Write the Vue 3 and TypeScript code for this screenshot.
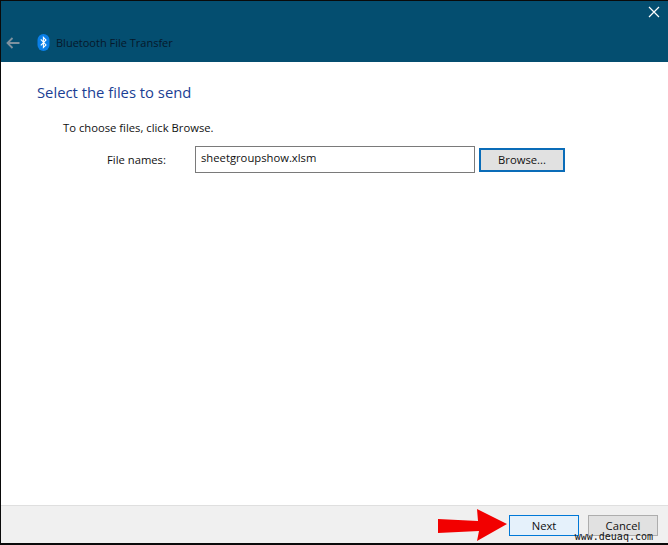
<script setup lang="ts">
const fileName: string = 'sheetgroupshow.xlsm'
</script>

<template>
  <div class="window">
    <header class="titlebar">
      <div class="close-row">
        <svg class="close" width="12" height="12" viewBox="0 0 12 12">
          <path d="M1 1 L11 11 M11 1 L1 11" stroke="#fff" stroke-width="1.2" fill="none" />
        </svg>
      </div>
      <div class="title-row">
        <svg class="back" width="14" height="12" viewBox="0 0 14 12">
          <path d="M6.5 1 L1.5 6 L6.5 11 M1.5 6 H13.5" stroke="#7f929f" stroke-width="1.8" fill="none" />
        </svg>
        <svg class="bt" width="13" height="17" viewBox="0 0 13 17">
          <rect x="0.5" y="0" width="12" height="17" rx="6" fill="#0a7fe8" />
          <path d="M3.8 5.4 L9 10.9 L6.4 13.4 V3.4 L9 6 L3.8 11.4" stroke="#fff" stroke-width="1.1" fill="none" />
        </svg>
        <span class="title">Bluetooth File Transfer</span>
      </div>
    </header>
    <main class="content">
      <h1 class="heading">Select the files to send</h1>
      <p class="hint">To choose files, click Browse.</p>
      <div class="field">
        <label class="label">File names:</label>
        <div class="input">{{ fileName }}</div>
        <button class="btn browse">Browse...</button>
      </div>
    </main>
    <footer class="footer">
      <div class="next-wrap">
        <svg class="arrow" width="71" height="33" viewBox="0 0 71 33">
          <path d="M0 10 L40 12 L39 0 L69 15 L39 32 L41 22 L0 24 Z" fill="#f20000" />
        </svg>
        <button class="btn next">Next</button>
      </div>
      <button class="btn cancel">Cancel</button>
      <span class="watermark">www.deuaq.com</span>
    </footer>
  </div>
</template>

<style>
html, body { margin: 0; background: #fff; }
</style>

<style scoped>
.window {
  width: 668px;
  height: 545px;
  box-sizing: border-box;
  border: 1px solid #0a0a0a;
  border-width: 1px 0 2px 1px;
  display: flex;
  flex-direction: column;
  font-family: "Open Sans", "Noto Sans", sans-serif;
  font-size: 11.25px;
  color: #111;
  background: #fff;
  overflow: hidden;
}
.titlebar {
  height: 61px;
  background: #044e70;
  flex: none;
  display: flex;
  flex-direction: column;
}
.close-row {
  display: flex;
  justify-content: flex-end;
  padding: 5px 8px 0 0;
  height: 14px;
}
.title-row {
  display: flex;
  align-items: center;
  margin-top: 14px;
  padding-left: 5px;
}
.bt { margin-left: 17px; }
.title {
  margin-left: 6px;
  color: #06182a;
  font-size: 11px;
}
.content {
  flex: 1;
  padding: 0 0 0 36px;
}
.heading {
  margin: 20px 0 0;
  font-weight: 400;
  font-size: 14.8px;
  line-height: 21px;
  color: #1a3e94;
}
.hint {
  margin: 17px 0 0 26px;
  line-height: 16px;
}
.field {
  display: flex;
  align-items: center;
  margin: 10px 0 0 70px;
}
.label { width: 88px; }
.input {
  width: 273px;
  height: 25px;
  border: 1px solid #7a7a7a;
  padding-left: 5px;
  line-height: 21px;
  color: #111;
}
.btn {
  font: inherit;
  color: #111;
  padding: 0;
  box-sizing: border-box;
}
.browse {
  margin-left: 4px;
  width: 86px;
  height: 24px;
  background: #e1e1e1;
  border: 2px solid #0a6cb8;
}
.footer {
  flex: none;
  height: 38px;
  background: #f0f0f0;
  border-top: 1px solid #dfdfdf;
  box-sizing: border-box;
  display: flex;
  align-items: flex-start;
  justify-content: flex-end;
  padding: 9px 10px 0 0;
  position: relative;
}
.next-wrap {
  position: relative;
  margin-right: 9px;
}
.arrow {
  position: absolute;
  left: -71px;
  top: -6px;
}
.next {
  display: block;
  width: 70px;
  height: 21px;
  background: #e5f1fb;
  border: 1px solid #0078d7;
}
.cancel {
  width: 70px;
  height: 21px;
  background: #e1e1e1;
  border: 1px solid #adadad;
}
.watermark {
  position: absolute;
  right: 15px;
  bottom: 1px;
  font-family: "DejaVu Sans Mono", monospace;
  font-size: 10px;
  letter-spacing: 0;
  line-height: 11px;
  color: #111;
}
</style>
